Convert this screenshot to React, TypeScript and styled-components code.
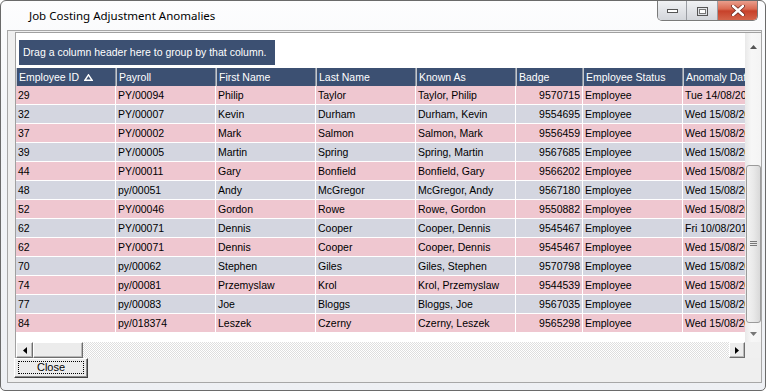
import styled, { createGlobalStyle } from "styled-components";

const GlobalStyle = createGlobalStyle`
  html, body {
    margin: 0;
    padding: 0;
    background: #ffffff;
  }
  body {
    width: 766px;
    height: 391px;
    overflow: hidden;
    font-family: "Liberation Sans", Arial, sans-serif;
  }
`;

interface Column {
  key: string;
  title: string;
  width: number;
  align?: "left" | "right";
}

const columns: Column[] = [
  { key: "id", title: "Employee ID", width: 100 },
  { key: "payroll", title: "Payroll", width: 100 },
  { key: "first", title: "First Name", width: 100 },
  { key: "last", title: "Last Name", width: 100 },
  { key: "known", title: "Known As", width: 100 },
  { key: "badge", title: "Badge", width: 67, align: "right" },
  { key: "status", title: "Employee Status", width: 100 },
  { key: "date", title: "Anomaly Date", width: 120 },
];

const rows: Record<string, string>[] = [
  { id: "29", payroll: "PY/00094", first: "Philip", last: "Taylor", badge: "9570715", date: "Tue 14/08/2012" },
  { id: "32", payroll: "PY/00007", first: "Kevin", last: "Durham", badge: "9554695", date: "Wed 15/08/2012" },
  { id: "37", payroll: "PY/00002", first: "Mark", last: "Salmon", badge: "9556459", date: "Wed 15/08/2012" },
  { id: "39", payroll: "PY/00005", first: "Martin", last: "Spring", badge: "9567685", date: "Wed 15/08/2012" },
  { id: "44", payroll: "PY/00011", first: "Gary", last: "Bonfield", badge: "9566202", date: "Wed 15/08/2012" },
  { id: "48", payroll: "py/00051", first: "Andy", last: "McGregor", badge: "9567180", date: "Wed 15/08/2012" },
  { id: "52", payroll: "PY/00046", first: "Gordon", last: "Rowe", badge: "9550882", date: "Wed 15/08/2012" },
  { id: "62", payroll: "PY/00071", first: "Dennis", last: "Cooper", badge: "9545467", date: "Fri 10/08/2012" },
  { id: "62", payroll: "PY/00071", first: "Dennis", last: "Cooper", badge: "9545467", date: "Wed 15/08/2012" },
  { id: "70", payroll: "py/00062", first: "Stephen", last: "Giles", badge: "9570798", date: "Wed 15/08/2012" },
  { id: "74", payroll: "py/00081", first: "Przemyslaw", last: "Krol", badge: "9544539", date: "Wed 15/08/2012" },
  { id: "77", payroll: "py/00083", first: "Joe", last: "Bloggs", badge: "9567035", date: "Wed 15/08/2012" },
  { id: "84", payroll: "py/018374", first: "Leszek", last: "Czerny", badge: "9565298", date: "Wed 15/08/2012" },
].map((r) => ({ ...r, known: `${r.last}, ${r.first}`, status: "Employee" }));

const App = () => {
  return (
    <>
      <GlobalStyle />
      <Window>
        <TitleBar>
          <Title>Job Costing Adjustment Anomalies</Title>
          <Controls>
            <CtrlButton $w={29}>
              <svg width="11" height="5" viewBox="0 0 11 5">
                <rect x="0.5" y="0.5" width="10" height="3" fill="#fff" stroke="#555" />
              </svg>
            </CtrlButton>
            <CtrlButton $w={31}>
              <svg width="11" height="9" viewBox="0 0 11 9">
                <rect x="0.5" y="0.5" width="10" height="8" fill="none" stroke="#555" />
                <rect x="2.5" y="2.5" width="6" height="4" fill="#fff" stroke="#777" />
              </svg>
            </CtrlButton>
            <CloseCtrl>
              <svg width="14" height="11" viewBox="0 0 14 11">
                <path d="M2 1 L12 10 M12 1 L2 10" stroke="#6b2a20" strokeWidth="4" strokeLinecap="round" />
                <path d="M2 1 L12 10 M12 1 L2 10" stroke="#ffffff" strokeWidth="2.4" strokeLinecap="round" />
              </svg>
            </CloseCtrl>
          </Controls>
        </TitleBar>
        <Client>
          <GridBox>
            <GridContent>
              <GroupPanel>Drag a column header here to group by that column.</GroupPanel>
              <HeaderRow>
                {columns.map((c, i) => (
                  <HeaderCell key={c.key} $w={c.width}>
                    {c.title}
                    {i === 0 && (
                      <SortGlyph width="9" height="7" viewBox="0 0 9 7">
                        <path d="M4.5 0.8 L8.2 6.3 L0.8 6.3 Z" fill="none" stroke="#fff" strokeWidth="1.4" />
                      </SortGlyph>
                    )}
                  </HeaderCell>
                ))}
              </HeaderRow>
              {rows.map((r, i) => (
                <DataRow key={i} $alt={i % 2 === 1}>
                  {columns.map((c) => (
                    <Cell key={c.key} $w={c.width} $align={c.align}>
                      {r[c.key]}
                    </Cell>
                  ))}
                </DataRow>
              ))}
            </GridContent>
            <VScroll>
              <VArrow $h={22}>
                <svg width="7" height="4" viewBox="0 0 7 4">
                  <path d="M0 4 L3.5 0 L7 4 Z" fill="#555" />
                </svg>
              </VArrow>
              <VTrack>
                <VThumb>
                  <svg width="7" height="6" viewBox="0 0 7 6">
                    <path d="M0 0.5 H7 M0 2.5 H7 M0 4.5 H7" stroke="#777" strokeWidth="1" />
                  </svg>
                </VThumb>
              </VTrack>
              <VArrow $h={17}>
                <svg width="7" height="4" viewBox="0 0 7 4">
                  <path d="M0 0 L3.5 4 L7 0 Z" fill="#777" />
                </svg>
              </VArrow>
            </VScroll>
            <HScroll>
              <HButton $w={17}>
                <svg width="4" height="7" viewBox="0 0 4 7">
                  <path d="M4 0 L0 3.5 L4 7 Z" fill="#000" />
                </svg>
              </HButton>
              <HButton $w={50} />
              <HTrack />
              <HButton $w={16}>
                <svg width="4" height="7" viewBox="0 0 4 7">
                  <path d="M0 0 L4 3.5 L0 7 Z" fill="#000" />
                </svg>
              </HButton>
            </HScroll>
            <Corner />
          </GridBox>
          <CloseButton>
            <FocusRect>Close</FocusRect>
          </CloseButton>
        </Client>
      </Window>
    </>
  );
};

const Window = styled.div`
  box-sizing: border-box;
  width: 766px;
  height: 391px;
  border: 1px solid #6a6a6a;
  border-radius: 6px 6px 5px 5px;
  background: linear-gradient(180deg, #fdfdfe 0%, #f3f5f8 30%, #eef0f4 100%);
  display: flex;
  flex-direction: column;
  overflow: hidden;
`;

const TitleBar = styled.div`
  height: 29px;
  flex-shrink: 0;
  display: flex;
  align-items: flex-start;
`;

const Title = styled.div`
  margin: 7px 0 0 28px;
  font-family: "Noto Sans", "Open Sans", sans-serif;
  font-size: 11.5px;
  line-height: 16px;
  color: #000;
  white-space: nowrap;
`;

const Controls = styled.div`
  margin: -1px 7px 0 auto;
  display: flex;
  height: 20px;
  border: 1px solid #7a7a7a;
  border-top: none;
  border-radius: 0 0 5px 5px;
  overflow: hidden;
  box-shadow: 0 1px 0 rgba(255, 255, 255, 0.8);
`;

const CtrlButton = styled.div<{ $w: number }>`
  width: ${(p) => p.$w}px;
  display: flex;
  align-items: center;
  justify-content: center;
  padding-top: 2px;
  box-sizing: border-box;
  background: linear-gradient(180deg, #f2f3f5 0%, #e2e4e8 50%, #d3d6db 100%);
  border-right: 1px solid #9a9da3;
`;

const CloseCtrl = styled.div`
  width: 39px;
  display: flex;
  align-items: center;
  justify-content: center;
  background: linear-gradient(180deg, #eba594 0%, #da6a52 45%, #c7412a 55%, #d4644a 100%);
`;

const Client = styled.div`
  flex: 1;
  margin: 0 3px 7px 6px;
  border: 1px solid #a7a7a7;
  background: #efefef;
  display: flex;
  flex-direction: column;
  align-items: flex-start;
`;

const GridBox = styled.div`
  align-self: stretch;
  margin: 1px 0 0 7px;
  height: 326px;
  box-sizing: border-box;
  border-top: 1px solid #a0a0a0;
  border-left: 1px solid #a0a0a0;
  background: #ffffff;
  display: grid;
  grid-template-columns: 1fr 16px;
  grid-template-rows: 1fr 16px;
`;

const GridContent = styled.div`
  overflow: hidden;
  display: flex;
  flex-direction: column;
  font-size: 10.5px;
  min-width: 0;
`;

const GroupPanel = styled.div`
  width: 256px;
  height: 25px;
  margin: 7px 0 3px 3px;
  padding-left: 4px;
  box-sizing: border-box;
  background: #3c5072;
  color: #fff;
  line-height: 25px;
  white-space: nowrap;
`;

const HeaderRow = styled.div`
  display: flex;
  height: 18px;
  flex-shrink: 0;
  background: #3c5072;
`;

const HeaderCell = styled.div<{ $w: number }>`
  width: ${(p) => p.$w}px;
  flex-shrink: 0;
  box-sizing: border-box;
  border-left: 1px solid #c3c7ce;
  border-right: 1px solid #8c95a3;
  padding-left: 2px;
  color: #fff;
  line-height: 18px;
  white-space: nowrap;
  overflow: hidden;
  display: flex;
  align-items: center;
`;

const SortGlyph = styled.svg`
  margin-left: 5px;
`;

const DataRow = styled.div<{ $alt: boolean }>`
  display: flex;
  height: 19px;
  flex-shrink: 0;
  box-sizing: border-box;
  border-bottom: 1px solid #ffffff;
  background: ${(p) => (p.$alt ? "#d4d6e0" : "#efc7d0")};
`;

const Cell = styled.div<{ $w: number; $align?: "left" | "right" }>`
  width: ${(p) => p.$w}px;
  flex-shrink: 0;
  box-sizing: border-box;
  border-right: 1px solid #ffffff;
  padding: 0 2px;
  line-height: 18px;
  color: #000;
  white-space: nowrap;
  overflow: hidden;
  text-align: ${(p) => p.$align ?? "left"};
`;

const VScroll = styled.div`
  display: flex;
  flex-direction: column;
  background: linear-gradient(90deg, #e9e9e9 0%, #f7f7f7 40%, #f4f4f4 100%);
`;

const VArrow = styled.div<{ $h: number }>`
  height: ${(p) => p.$h}px;
  flex-shrink: 0;
  display: flex;
  align-items: flex-end;
  justify-content: center;
  padding-bottom: 6px;
  box-sizing: border-box;
`;

const VTrack = styled.div`
  flex: 1;
  display: flex;
  flex-direction: column;
  align-items: center;
  padding-top: 110px;
`;

const VThumb = styled.div`
  width: 15px;
  height: 158px;
  box-sizing: border-box;
  border: 1px solid #9b9b9b;
  border-radius: 3px;
  background: linear-gradient(90deg, #f3f3f3 0%, #e9e9e9 50%, #d9d9d9 100%);
  display: flex;
  align-items: center;
  justify-content: center;
`;

const HScroll = styled.div`
  display: flex;
  background: repeating-conic-gradient(#ffffff 0 25%, #dedede 0 50%) 0 0 / 2px 2px;
`;

const HButton = styled.div<{ $w: number }>`
  width: ${(p) => p.$w}px;
  flex-shrink: 0;
  box-sizing: border-box;
  background: #ececec;
  border-top: 1px solid #ffffff;
  border-left: 1px solid #ffffff;
  border-right: 1px solid #6e6e6e;
  border-bottom: 1px solid #6e6e6e;
  box-shadow: inset -1px -1px 0 #b8b8b8;
  display: flex;
  align-items: center;
  justify-content: center;
`;

const HTrack = styled.div`
  flex: 1;
`;

const Corner = styled.div`
  background: #f0f0f0;
`;

const CloseButton = styled.div`
  margin-left: 6px;
  width: 74px;
  height: 20px;
  box-sizing: border-box;
  border-top: 1px solid #ffffff;
  border-left: 1px solid #ffffff;
  border-right: 1px solid #404040;
  border-bottom: 1px solid #404040;
  box-shadow: inset -1px -1px 0 #8c8c8c;
  background: #ececec;
  display: flex;
  padding: 2px 3px 3px 3px;
`;

const FocusRect = styled.div`
  flex: 1;
  border: 1px dotted #000;
  font-size: 11px;
  line-height: 11px;
  color: #000;
  display: flex;
  align-items: center;
  justify-content: center;
`;

export default App;
